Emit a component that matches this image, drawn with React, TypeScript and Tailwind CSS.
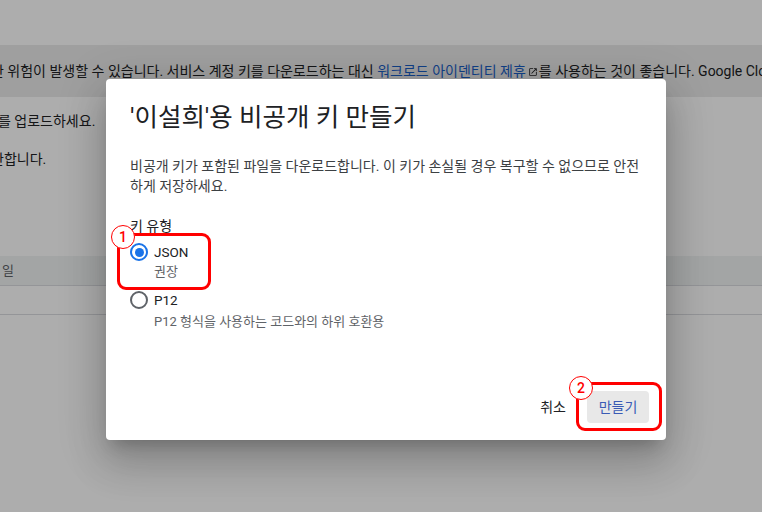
import React from 'react';

const FONT = "font-['Roboto','Noto_Sans_CJK_KR',sans-serif]";

function ExternalIcon() {
  return (
    <svg width="10" height="10" viewBox="0 0 24 24" className="inline-block ml-[2px] mr-[1px] align-[-1px]">
      <path d="M19 19H5V5h7V3H5a2 2 0 0 0-2 2v14a2 2 0 0 0 2 2h14c1.1 0 2-.9 2-2v-7h-2v7zM14 3v2h3.59l-9.83 9.83 1.41 1.41L19 6.41V10h2V3h-7z" fill="currentColor" />
    </svg>
  );
}

function Radio({ checked }: { checked: boolean }) {
  return (
    <span
      className={
        checked
          ? 'w-[18px] h-[18px] rounded-full border-2 border-[#1a73e8] flex items-center justify-center shrink-0'
          : 'w-[18px] h-[18px] rounded-full border-2 border-[#5f6368] flex items-center justify-center shrink-0'
      }
    >
      {checked && <span className="w-[9px] h-[9px] rounded-full bg-[#1a73e8]" />}
    </span>
  );
}

function Marker({ n, className }: { n: number; className: string }) {
  return (
    <div
      className={`absolute w-[24px] h-[24px] rounded-full bg-white border-[1.5px] border-[#ff0000] flex items-center justify-center text-[14px] font-medium text-[#ff0000] leading-none ${className}`}
    >
      {n}
    </div>
  );
}

export default function App() {
  return (
    <div className={`relative w-[762px] h-[512px] overflow-hidden bg-white text-[#202124] ${FONT}`}>
      {/* page underneath */}
      <div className="flex flex-col">
        <div className="h-[45px]" />
        <div className="h-[52px] bg-[#ebebeb] flex items-center text-[14px] whitespace-nowrap">
          <span className="ml-[-9px]">
            한 위험이 발생할 수 있습니다. 서비스 계정 키를 다운로드하는 대신{' '}
            <span className="text-[#1a5fc8] underline underline-offset-[3px]">워크로드 아이덴티티 제휴</span>
            <ExternalIcon />를 사용하는 것이 좋습니다. Google Cloud에서 키 관리 방법을 알아보세요.
          </span>
        </div>
        <div className="mt-[14px] text-[14px] leading-[20px] whitespace-nowrap ml-[-2px]">를 업로드하세요.</div>
        <div className="mt-[18px] text-[14px] leading-[20px] whitespace-nowrap ml-[-9px]">한합니다.</div>
        <div className="mt-[87px] h-[30px] bg-[#f1f3f4] border-b border-[#dadce0] flex items-center text-[13px] text-[#5f6368] pl-[2px]">
          일
        </div>
        <div className="h-[29px] border-b border-[#dadce0]" />
      </div>

      {/* scrim + dialog */}
      <div className="absolute inset-0 bg-black/[0.32] flex items-start justify-center pt-[79px] pl-[10px]">
        <div className="relative w-[560px] h-[361px] bg-white rounded-[4px] shadow-[0_11px_15px_-7px_rgba(0,0,0,0.2),0_24px_38px_3px_rgba(0,0,0,0.14),0_9px_46px_8px_rgba(0,0,0,0.12)] flex flex-col px-6 pt-[22px]">
          <h2 className="text-[25.5px] leading-[32px] font-normal text-[#202124]">'이설희'용 비공개 키 만들기</h2>
          <p className="mt-[23px] text-[14px] leading-[20px] text-[#3c4043] w-[512px]">
            비공개 키가 포함된 파일을 다운로드합니다. 이 키가 손실될 경우 복구할 수 없으므로 안전하게 저장하세요.
          </p>
          <div className="mt-[20px] text-[14px] leading-[20px]">키 유형</div>

          <div className="mt-[6px] flex items-center gap-[6px] h-[20px]">
            <Radio checked />
            <span className="text-[13.5px]">JSON</span>
          </div>
          <div className="mt-[2px] pl-[24px] text-[13px] leading-[16px] text-[#5f6368]">권장</div>

          <div className="mt-[10px] flex items-center gap-[6px] h-[20px]">
            <Radio checked={false} />
            <span className="text-[13.5px]">P12</span>
          </div>
          <div className="mt-[4px] pl-[24px] text-[13px] leading-[16px] text-[#5f6368]">
            P12 형식을 사용하는 코드와의 하위 호환용
          </div>

          <div className="mt-auto mb-[17px] flex items-center justify-end gap-[21px] mr-[-7px]">
            <button className="text-[14px] text-[#202124]">취소</button>
            <button className="h-[32px] w-[62px] rounded-[4px] bg-[#e8e8e8] text-[14px] text-[#3b5bb5]">만들기</button>
          </div>

          {/* annotations */}
          <div className="absolute left-[11px] top-[154px] w-[94px] h-[57px] border-[3px] border-[#ff0000] rounded-[9px]" />
          <Marker n={1} className="left-[5px] top-[146px]" />
          <div className="absolute left-[470px] top-[303px] w-[86px] h-[49px] border-[3px] border-[#ff0000] rounded-[9px]" />
          <Marker n={2} className="left-[463px] top-[297px]" />
        </div>
      </div>
    </div>
  );
}
